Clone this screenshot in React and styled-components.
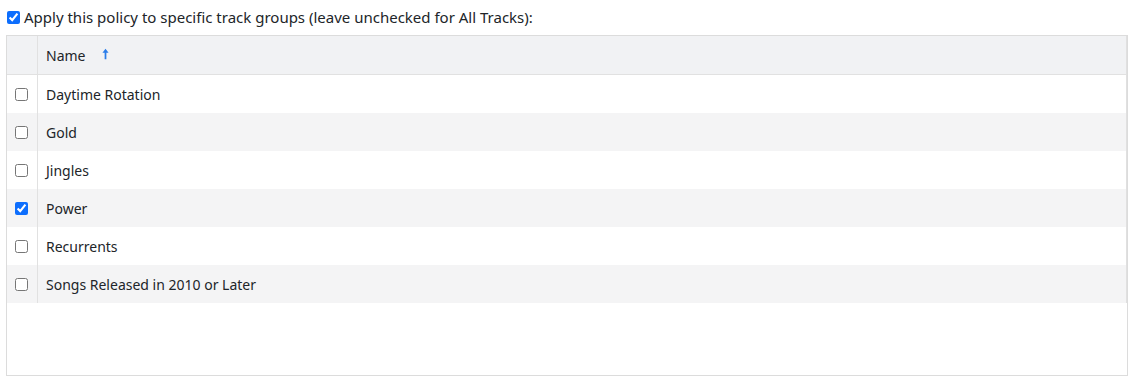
import styled, { createGlobalStyle } from "styled-components";

const Global = createGlobalStyle`
  body {
    margin: 0;
    background: #fff;
    font-family: "Noto Sans", "Liberation Sans", sans-serif;
    font-size: 14px;
    color: #212529;
  }
`;

const groups = [
  { name: "Daytime Rotation", checked: false },
  { name: "Gold", checked: false },
  { name: "Jingles", checked: false },
  { name: "Power", checked: true },
  { name: "Recurrents", checked: false },
  { name: "Songs Released in 2010 or Later", checked: false },
];

export default function App() {
  return (
    <Page>
      <Global />
      <Toggle>
        <Check type="checkbox" defaultChecked />
        <span>Apply this policy to specific track groups (leave unchecked for All Tracks):</span>
      </Toggle>
      <Box>
        <Table>
          <HeadRow>
            <Cell $narrow />
            <Cell>
              Name
              <SortArrow viewBox="0 0 8 12">
                <path d="M4 0 L7.5 4.5 H5 V12 H3 V4.5 H0.5 Z" fill="#2b7de9" />
              </SortArrow>
            </Cell>
          </HeadRow>
          {groups.map((g, i) => (
            <Row key={g.name} $striped={i % 2 === 1}>
              <Cell $narrow>
                <Check type="checkbox" defaultChecked={g.checked} />
              </Cell>
              <Cell>{g.name}</Cell>
            </Row>
          ))}
        </Table>
      </Box>
    </Page>
  );
}

const Page = styled.div`
  padding: 6px 5px 6px 6px;
`;

const Toggle = styled.label`
  display: flex;
  align-items: center;
  gap: 4px;
  height: 22px;
  margin-bottom: 7px;
  font-size: 15px;
`;

const Check = styled.input`
  width: 13px;
  height: 13px;
  margin: 0 0 0 1px;
  accent-color: #0d6efd;
`;

const Box = styled.div`
  height: 339px;
  border: 1px solid #dcdcdc;
`;

const Table = styled.div`
  border-right: 1px solid #e0e0e0;
`;

const HeadRow = styled.div`
  display: flex;
  height: 38px;
  background: #f1f2f4;
  border-bottom: 1px solid #e1e1e1;
`;

const Row = styled.div`
  display: flex;
  height: 38px;
  background: ${(p) => (p.$striped ? "#f4f4f5" : "#fff")};
`;

const Cell = styled.div`
  display: flex;
  align-items: center;
  box-sizing: border-box;
  ${(p) =>
    p.$narrow
      ? `width: 31px; padding-left: 7px; border-right: 1px solid #e1e1e1;`
      : `flex: 1; padding-left: 8px;`}
`;

const SortArrow = styled.svg`
  width: 7px;
  height: 12px;
  margin-left: 17px;
  margin-bottom: 2px;
`;
